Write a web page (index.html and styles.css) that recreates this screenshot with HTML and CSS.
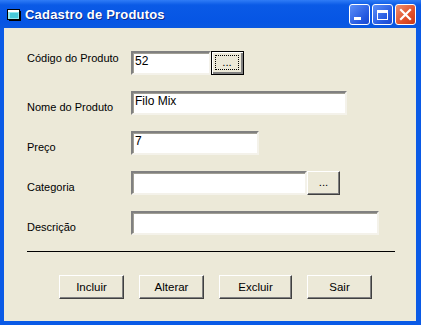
FILE: index.html
```html
<!DOCTYPE html>
<html lang="pt">
    <head>
        <meta name="viewport" content="width=device-width, initial-scale=1.0">
        <title>Cadastro de Produtos</title>
        <link rel="stylesheet" href="styles.css">
    </head>
    <body>
        <div class="window">
            <div class="titlebar">
                <svg class="app-icon" width="14" height="12" viewBox="0 0 14 12">
                    <rect x="0.5" y="0.5" width="12" height="10" fill="#8fe8f0" stroke="#000"/>
                    <rect x="1" y="1" width="11" height="2" fill="#ffffff"/>
                    <rect x="3" y="4" width="8" height="5" fill="#48c8d8"/>
                    <rect x="13" y="2" width="1" height="10" fill="#000"/>
                    <rect x="2" y="11" width="12" height="1" fill="#000"/>
                </svg>
                <span class="title">Cadastro de Produtos</span>
                <div class="caption-buttons">
                    <span class="cap-btn"><span class="min-glyph"></span></span>
                    <span class="cap-btn"><span class="max-glyph"></span></span>
                    <span class="cap-btn close">
                        <svg width="13" height="13" viewBox="0 0 13 13">
                            <path d="M2 2 L11 11 M11 2 L2 11" stroke="#fff" stroke-width="2.2" stroke-linecap="square"/>
                        </svg>
                    </span>
                </div>
            </div>
            <div class="client">
                <div class="row">
                    <label class="lbl first">Código do Produto</label>
                    <div class="field w80">52</div>
                    <div class="btn small focused"><span class="focus-rect">...</span></div>
                </div>
                <div class="row">
                    <label class="lbl">Nome do Produto</label>
                    <div class="field w216">Filo Mix</div>
                </div>
                <div class="row">
                    <label class="lbl">Preço</label>
                    <div class="field w128">7</div>
                </div>
                <div class="row">
                    <label class="lbl">Categoria</label>
                    <div class="field w176"></div>
                    <div class="btn small">...</div>
                </div>
                <div class="row">
                    <label class="lbl">Descrição</label>
                    <div class="field w248"></div>
                </div>
                <div class="separator"></div>
                <div class="actions">
                    <div class="btn wide">Incluir</div>
                    <div class="btn wide">Alterar</div>
                    <div class="btn wider">Excluir</div>
                    <div class="btn wide">Sair</div>
                </div>
            </div>
        </div>
    </body>
</html>
```

FILE: styles.css
```css
* {
    box-sizing: border-box;
}

body {
    margin: 0;
    padding: 0;
    background-color: #ECE9D8;
    font-family: "Liberation Sans", Arial, sans-serif;
    font-size: 11px;
    color: #000000;
}

.window {
    width: 421px;
    height: 325px;
    background-color: #0A5AE6;
    padding: 0 5px 4px 4px;
    display: flex;
    flex-direction: column;
}

.titlebar {
    height: 28px;
    margin: 0 -5px 0 -4px;
    padding: 0 5px 0 7px;
    background: linear-gradient(#2F7CF6 0, #0A5AE6 5px, #0655E4 22px, #0A58E0 28px);
    display: flex;
    align-items: center;
    color: #ffffff;
}

.app-icon {
    margin-top: 1px;
}

.title {
    margin-left: 4px;
    font-family: "Liberation Sans", Arial, sans-serif;
    font-weight: bold;
    font-size: 13px;
    letter-spacing: 0.2px;
    text-shadow: 1px 1px 0 #0A2A8A;
    flex: 1;
}

.caption-buttons {
    display: flex;
    gap: 2px;
    margin-top: 1px;
}

.cap-btn {
    width: 21px;
    height: 21px;
    border: 1px solid #ffffff;
    border-radius: 3px;
    background: linear-gradient(135deg, #5C8FF8, #2458E0 70%, #1A48D0);
    display: flex;
    align-items: center;
    justify-content: center;
}

.cap-btn.close {
    background: linear-gradient(135deg, #F09070, #E0502A 60%, #C83818);
}

.min-glyph {
    width: 7px;
    height: 3px;
    background: #ffffff;
    margin-top: 8px;
    margin-right: 5px;
}

.max-glyph {
    width: 11px;
    height: 10px;
    border: 1px solid #ffffff;
    border-top-width: 3px;
}

.client {
    flex: 1;
    background-color: #ECE9D8;
    padding: 23px 0 0 23px;
}

.row {
    display: flex;
    height: 24px;
    margin-bottom: 16px;
}

.lbl {
    width: 104px;
    line-height: 14px;
    margin-top: 9px;
}

.lbl.first {
    margin-top: 0;
}

.field {
    height: 24px;
    background: #ffffff;
    border-style: solid;
    border-width: 2px;
    border-color: #808080 #F4F2EA #F4F2EA #808080;
    box-shadow: inset 1px 1px 0 #A09E94;
    padding: 1px 2px 0;
    line-height: 14px;
    font-size: 12px;
}

.w80 { width: 80px; }
.w216 { width: 216px; }
.w128 { width: 128px; }
.w176 { width: 176px; }
.w248 { width: 248px; }

.btn {
    height: 24px;
    background: #ECE9D8;
    border-style: solid;
    border-width: 1px;
    border-color: #ffffff #404040 #404040 #ffffff;
    box-shadow: inset -1px -1px 0 #808080;
    display: flex;
    align-items: center;
    justify-content: center;
    line-height: 14px;
    font-size: 11.5px;
}

.btn.small {
    width: 33px;
    padding-bottom: 2px;
}

.btn.focused {
    border-color: #000000;
    box-shadow: inset 1px 1px 0 #ffffff, inset -2px -2px 0 #808080;
    padding: 3px 4px 4px 3px;
}

.focus-rect {
    flex: 1;
    align-self: stretch;
    border: 1px dotted #000000;
    display: flex;
    align-items: center;
    justify-content: center;
    padding-bottom: 2px;
}

.separator {
    width: 368px;
    height: 1px;
    background: #000000;
    margin-top: 8px;
}

.actions {
    display: flex;
    gap: 15px;
    margin-top: 23px;
    padding-left: 32px;
}

.btn.wide {
    width: 65px;
}

.btn.wider {
    width: 73px;
}
```
